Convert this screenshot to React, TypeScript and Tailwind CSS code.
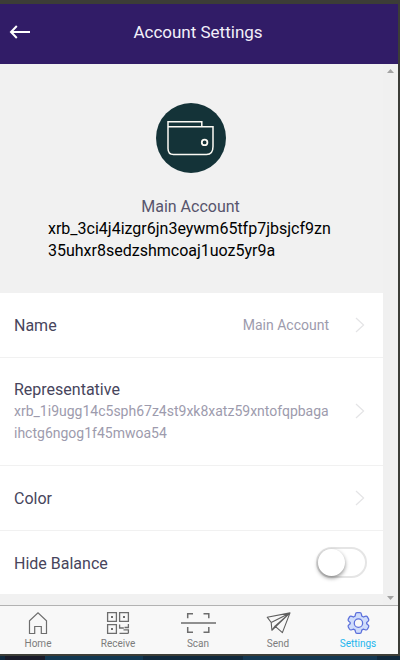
import type { ReactNode } from "react";

function Chevron() {
  return (
    <svg className="shrink-0" width="10" height="16" viewBox="0 0 10 16" fill="none" stroke="#e4e4e6" strokeWidth="1.2">
      <path d="M1 1l7.6 7L1 15" />
    </svg>
  );
}

function Wallet() {
  return (
    <svg width="70" height="70" viewBox="0 0 70 70" fill="none" stroke="#fbfaf4" strokeWidth="1.5">
      <path d="M12 23.800h45V43.500q0 8-6.500 8H17.500q-5.500 0-5.500-6V18.800h33.800v5" />
      <circle cx="48.600" cy="39.400" r="2.800" strokeWidth="1.800" />
    </svg>
  );
}

function HomeIcon() {
  return (
    <svg width="36" height="24" viewBox="0 0 36 24" fill="none" stroke="#6d6d6d" strokeWidth="1.200">
      <path d="M9.500 22.500V9.700L18 1.800l8.500 7.900v12.800h-5.200v-7h-6.600v7z" />
    </svg>
  );
}

function ReceiveIcon() {
  return (
    <svg width="36" height="24" viewBox="0 0 36 24" fill="none" stroke="#6d6d6d" strokeWidth="1.300">
      <path d="M7.600 1.600h8.800v8.800H7.600zM19.600 1.600h8.800v8.800h-8.800zM7.600 13.600h8.800v8.800H7.600z" />
      <path d="M11 6h2M23 6h2M11 18h2" strokeWidth="2" />
      <path d="M19.600 13.400V17h4.200M24.500 16.500h3.900v-3.600M19.500 22.300h9M28.400 22.300v-3.500h-4.900" />
    </svg>
  );
}

function ScanIcon() {
  return (
    <svg width="36" height="24" viewBox="0 0 36 24" fill="none" stroke="#6d6d6d" strokeWidth="1.500">
      <path d="M1 12h35" />
      <path d="M7.700 7.300V2.800H13M23.500 2.800h5.300v4.500M7.700 16v5.300H13M23.500 21.300h5.300V16" />
    </svg>
  );
}

function SendIcon() {
  return (
    <svg width="36" height="24" viewBox="0 0 36 24" fill="none" stroke="#5e5e5e" strokeWidth="1.100" strokeLinejoin="round">
      <path d="M30 1.900L7.200 6.200l4 5.300zM30 1.900L11.200 11.500l.7 7.800zM30 1.900L15 15.200l7.400 6.400zM11.900 19.300l3.100-4.100" />
    </svg>
  );
}

function SettingsIcon() {
  return (
    <svg width="36" height="24" viewBox="0 0 36 24" fill="#cfdcfb" stroke="#5c70db" strokeWidth="1.300" strokeLinejoin="round">
      <g transform="translate(.5 .2) scale(.97)">
        <path d="M15.400 3.300Q15.700 1.500 17 1.500h3q1.300 0 1.600 1.800l.3 1.700 1.700 1 1.700-.6q1.700-.6 2.400.5l1.300 2.300q.7 1.200-.7 2.300L27 11.600v1.300l1.300 1.100q1.400 1.100.7 2.300l-1.300 2.300q-.7 1.100-2.400.5l-1.700-.6-1.700 1-.3 1.700q-.3 1.700-1.600 1.700h-3q-1.300 0-1.600-1.700l-.3-1.700-1.700-1-1.700.6q-1.700.6-2.400-.5L8 16.300q-.7-1.200.7-2.300l1.300-1.100v-1.300l-1.300-1.100Q7.300 9.400 8 8.200l1.300-2.300q.7-1.100 2.400-.5l1.700.6 1.700-1z" />
        <circle cx="18.500" cy="12.300" r="4.300" fill="#f8f8f8" />
      </g>
    </svg>
  );
}

function Tab({ label, active, children }: { label: string; active?: boolean; children: ReactNode }) {
  return (
    <button className={`flex w-20 shrink-0 flex-col items-center pt-[5px] pr-1 text-[10px] leading-[14px] ${active ? "text-[#1fb6ee]" : "text-[#7c7c7c]"}`}>
      <span className="mb-[2px] block">{children}</span>
      <span>{label}</span>
    </button>
  );
}

export default function App() {
  return (
    <div className="flex h-[660px] w-[400px] flex-col overflow-hidden bg-[#3c3d37] pt-1 font-['Roboto','Noto_Sans',sans-serif] text-[#47455c]">
      <header className="mr-[2px] flex h-[60px] shrink-0 items-center bg-[#311c67] pb-1 text-[#f3f0fa]">
        <svg className="ml-[9px]" width="22" height="16" viewBox="0 0 22 16" fill="none" stroke="#ffffff" strokeWidth="2">
          <path d="M21 8H2.500M7.800 2L2 8l5.800 6" />
        </svg>
        <h1 className="mr-[31px] flex-1 pr-[2px] text-center text-[17px] leading-6">Account Settings</h1>
      </header>

      <div className="mr-[2px] flex h-[541px] shrink-0 bg-[#f1f1f1]">
        <main className="w-[383px]">
          <section className="flex h-[229px] flex-col items-center pt-[39px]">
            <div className="mr-px size-[70px] rounded-full bg-[#143338]"><Wallet /></div>
            <h2 className="mt-[23px] pr-[2px] text-base leading-[22px] text-[#58556d]">Main Account</h2>
            <p className="w-[287px] text-base leading-[22px] break-all text-black">xrb_3ci4j4izgr6jn3eywm65tfp7jbsjcf9zn<br />35uhxr8sedzshmcoaj1uoz5yr9a</p>
          </section>

          <section className="bg-white">
            <div className="flex h-[65px] items-center border-b border-[#f1f1f1] pr-[18px] pl-[14px]">
              <span className="flex-1 pt-[2px] text-base">Name</span>
              <span className="mr-[26px] text-sm text-[#9d9bad]">Main Account</span>
              <Chevron />
            </div>
            <div className="flex h-[108px] items-center border-b border-[#f1f1f1] pr-[18px] pb-px pl-[14px]">
              <div className="flex-1">
                <div className="h-[22px] pt-px text-base leading-[22px]">Representative</div>
                <div className="text-sm leading-[22px] text-[#9d9bad]">xrb_1i9ugg14c5sph67z4st9xk8xatz59xntofqpbaga<br />ihctg6ngog1f45mwoa54</div>
              </div>
              <Chevron />
            </div>
            <div className="flex h-[65px] items-center border-b border-[#f1f1f1] pr-[18px] pl-[14px]">
              <span className="flex-1 pt-[2px] text-base">Color</span>
              <Chevron />
            </div>
            <div className="flex h-[63px] items-center pr-4 pl-[14px]">
              <span className="flex-1 pt-[3px] text-base">Hide Balance</span>
              <span className="h-[31px] w-[51px] rounded-full border-2 border-[#e5e5e5] bg-white">
                <span className="block size-[27px] rounded-full bg-white shadow-[0_2px_4px_rgba(0,0,0,0.45)]" />
              </span>
            </div>
          </section>
        </main>
        <div className="flex w-[15px] flex-col items-center justify-between bg-[#f0f0f0] pt-[5px] pb-[5px]">
          <svg width="7" height="4" viewBox="0 0 7 4" fill="#a3a3a3"><path d="M0 4L3.500 0 7 4z" /></svg>
          <svg width="7" height="4" viewBox="0 0 7 4" fill="#a3a3a3"><path d="M0 0h7L3.500 4z" /></svg>
        </div>
      </div>

      <nav className="mr-[2px] flex h-[49px] shrink-0 border-t border-[#b2b2b2] bg-[#f8f8f8]">
        <Tab label="Home"><HomeIcon /></Tab>
        <Tab label="Receive"><ReceiveIcon /></Tab>
        <Tab label="Scan"><ScanIcon /></Tab>
        <Tab label="Send"><SendIcon /></Tab>
        <Tab label="Settings" active><SettingsIcon /></Tab>
      </nav>
      <footer className="mt-[2px] flex h-1 shrink-0 bg-[#10293d]">
        <span className="ml-[5px] w-10 bg-[#191b29]" />
        <span className="w-[98px] bg-[#123852]" />
        <span className="flex-1" />
        <span className="mr-[23px] w-[134px] bg-[#143852]" />
      </footer>
    </div>
  );
}
